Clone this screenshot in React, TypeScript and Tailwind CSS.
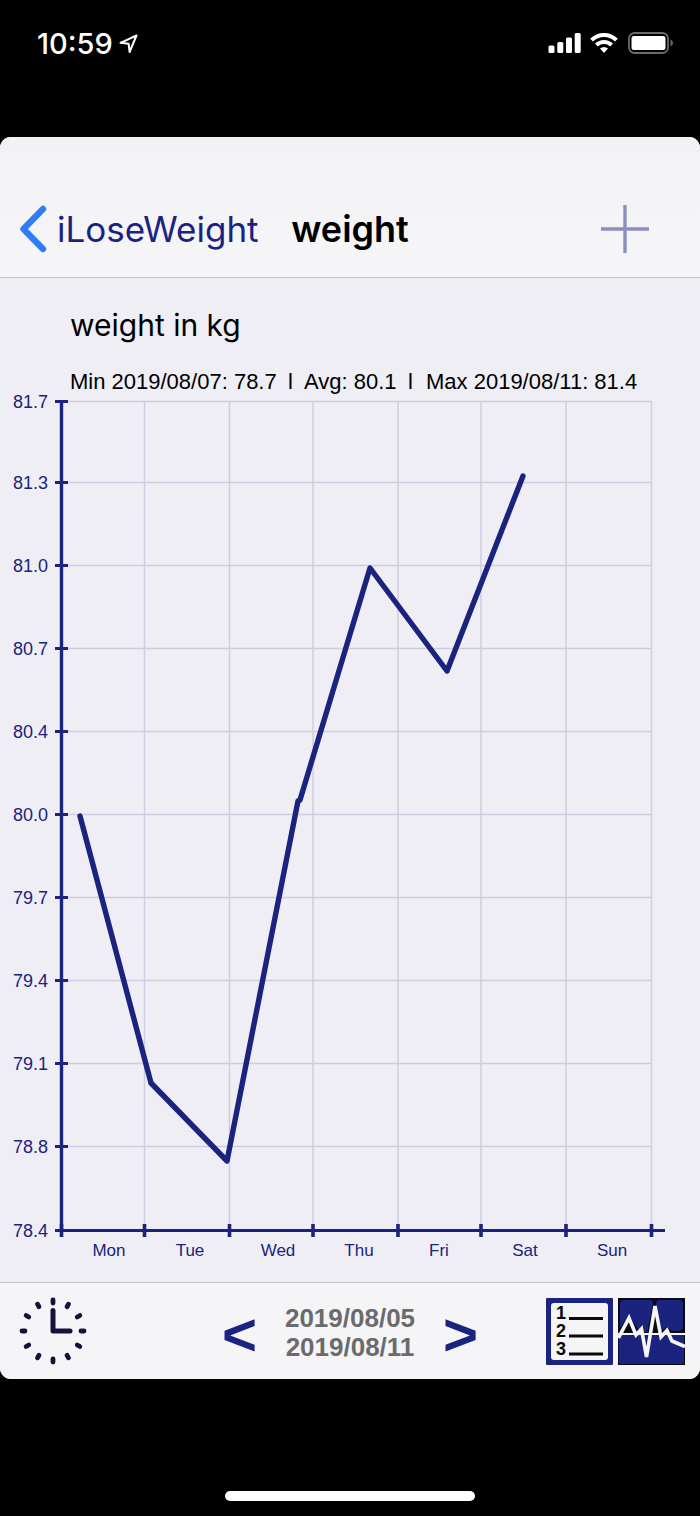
import { useState } from 'react';

interface Tick {
  pos: number;
  label: string;
}

interface DayLabel {
  x: number;
  name: string;
}

const yTicks: Tick[] = [
  { pos: 123.5, label: '81.7' },
  { pos: 204.5, label: '81.3' },
  { pos: 287.5, label: '81.0' },
  { pos: 370.5, label: '80.7' },
  { pos: 453.5, label: '80.4' },
  { pos: 536.5, label: '80.0' },
  { pos: 619.5, label: '79.7' },
  { pos: 702.5, label: '79.4' },
  { pos: 785.5, label: '79.1' },
  { pos: 868.5, label: '78.8' },
  { pos: 952.5, label: '78.4' },
];

const xTicks = [61.5, 144.5, 229.5, 313, 398, 481, 566, 651.5];

const days: DayLabel[] = [
  { x: 109, name: 'Mon' },
  { x: 190, name: 'Tue' },
  { x: 278, name: 'Wed' },
  { x: 359, name: 'Thu' },
  { x: 439, name: 'Fri' },
  { x: 525, name: 'Sat' },
  { x: 612, name: 'Sun' },
];

const weightLine = '80,538 151,805 227,883 298,523 300,522 370,290 447,393 523,198';

function StatusBar() {
  return (
    <div className="flex h-[137px] items-start justify-between pt-7 pr-[26px] pl-[37px]">
      <div className="flex h-8 items-center gap-[6px]">
        <span className="text-[29px] leading-8 font-medium">10:59</span>
        <svg width="19" height="20" viewBox="0 0 19 20" fill="none" stroke="white" strokeWidth="2" strokeLinejoin="round">
          <path d="M17.5 1.5 L1.5 8.8 L9.6 9.7 L10.6 18 Z" />
        </svg>
      </div>
      <svg width="126" height="32" viewBox="0 0 126 32" fill="white">
        {/* Signal */}
        <rect x="0.5" y="17.5" width="6" height="7.5" rx="1.5" />
        <rect x="9.3" y="14" width="6" height="11" rx="1.5" />
        <rect x="18" y="9.5" width="6" height="15.5" rx="1.5" />
        <rect x="26.7" y="5" width="6" height="20" rx="1.5" />
        {/* Wifi */}
        <g fill="none" stroke="white" strokeWidth="4">
          <path d="M43.6 12.2 A17.5 17.5 0 0 1 68.4 12.2" />
          <path d="M48.4 17 A11 11 0 0 1 63.6 17" />
        </g>
        <path d="M52 20.6 A6 6 0 0 1 60 20.6 L56 25 Z" />
        {/* Battery */}
        <rect x="81" y="5" width="39" height="20" rx="5.5" fill="none" stroke="#6b6b6b" strokeWidth="1.8" />
        <rect x="83.5" y="8" width="34" height="14" rx="2.5" />
        <path d="M122.5 11.5 Q125 12.5 125 15 Q125 17.5 122.5 18.5 Z" fill="#6b6b6b" />
      </svg>
    </div>
  );
}

function WeightChart() {
  return (
    <svg viewBox="0 0 700 1004" className="block w-full" role="img" aria-label="weight in kg">
      <text x="70" y="58" fontSize="30" fill="#000">weight in kg</text>
      <g fontSize="22" fill="#000" fontFamily="Liberation Sans, Arial, sans-serif">
        <text x="70" y="111">Min 2019/08/07: 78.7</text>
        <text x="288" y="111">l</text>
        <text x="304" y="111">Avg: 80.1</text>
        <text x="408" y="111">l</text>
        <text x="426" y="111">Max 2019/08/11: 81.4</text>
      </g>

      {/* Grid */}
      <g stroke="#cdcce1" strokeWidth="1.4">
        {yTicks.slice(0, -1).map((tick) => (
          <line key={tick.label} x1="61" x2="652" y1={tick.pos} y2={tick.pos} />
        ))}
        {xTicks.slice(1).map((x) => (
          <line key={x} x1={x} x2={x} y1="124" y2="952" />
        ))}
      </g>

      {/* Axes */}
      <g stroke="#1a237e" strokeWidth="3">
        <line x1="61.5" x2="61.5" y1="125" y2="952" strokeWidth="3.4" />
        <line x1="61" x2="665" y1="952.5" y2="952.5" />
        {yTicks.map((tick) => (
          <line key={tick.label} x1="55" x2="68" y1={tick.pos} y2={tick.pos} />
        ))}
        {xTicks.map((x) => (
          <line key={x} x1={x} x2={x} y1="946" y2="959" strokeWidth="3.6" />
        ))}
      </g>

      <g fontSize="18" fill="#1a237e" fontFamily="Liberation Sans, Arial, sans-serif">
        {yTicks.map((tick) => (
          <text key={tick.label} x="48" y={tick.pos + 6} textAnchor="end">{tick.label}</text>
        ))}
        {days.map((day) => (
          <text key={day.name} x={day.x} y="978" fontSize="17" textAnchor="middle">{day.name}</text>
        ))}
      </g>

      <polyline
        points={weightLine}
        fill="none"
        stroke="#1a237e"
        strokeWidth="5.4"
        strokeLinecap="round"
        strokeLinejoin="round"
      />
    </svg>
  );
}

function ClockIcon() {
  const marks = Array.from({ length: 12 }, (_, i) => i * 30);

  return (
    <svg width="68" height="68" viewBox="0 0 68 68" stroke="#14123c" strokeWidth="4.8" strokeLinecap="round" fill="none">
      {marks.map((angle) => (
        <line key={angle} x1="34" x2="34" y1="3" y2="6" transform={`rotate(${angle} 34 34)`} />
      ))}
      <path d="M34 13.5 V34 H51" strokeLinejoin="round" strokeWidth="5" />
    </svg>
  );
}

function ListIcon() {
  return (
    <svg width="67" height="67" viewBox="0 0 67 67">
      <rect width="67" height="67" rx="1" fill="#1a237e" />
      <rect x="5" y="5" width="57" height="57" rx="3" fill="#f5f5f7" />
      <g stroke="#0a0a0a" strokeWidth="2.8">
        <line x1="23" x2="57" y1="20.5" y2="20.5" />
        <line x1="23" x2="57" y1="38" y2="38" />
        <line x1="23" x2="57" y1="56" y2="56" />
      </g>
      <g fontSize="18" fontWeight="700" fill="#0a0a0a" textAnchor="middle" fontFamily="Liberation Sans, Arial, sans-serif">
        <text x="15" y="21">1</text>
        <text x="15" y="39">2</text>
        <text x="15" y="57">3</text>
      </g>
    </svg>
  );
}

function PulseIcon() {
  return (
    <svg width="67" height="67" viewBox="0 0 67 67">
      <rect width="67" height="67" fill="#0a0a12" />
      <path d="M0.8 36 V66 H66 V37 H0.8 Z" fill="#1a237e" />
      <path d="M6 2 H32 Q35 2 35 6 L29 35 L20 31 L11 17 L2 30 V6 Q2 2 6 2 Z" fill="#1a237e" />
      <path d="M40 2 H61 Q65 2 65 6 V28 Q65 33 61 33 H54 L49 29 L43 33 L38 8 Q38 2 40 2 Z" fill="#1a237e" />
      <line x1="0" x2="67" y1="36" y2="36" stroke="#f5f5f7" strokeWidth="1.8" />
      <path
        d="M0.5 40 L11 20 L18 37 L23.5 31 L28.5 59 L37 8 L43 39 L49 32.5 L54 43 L67 48.5"
        fill="none"
        stroke="#f5f5f7"
        strokeWidth="3.6"
      />
    </svg>
  );
}

export default function App() {
  const [view, setView] = useState<'list' | 'chart'>('chart');

  return (
    <div className="min-h-screen bg-black font-['Inter',sans-serif] text-white">
      <StatusBar />

      <main className="overflow-hidden rounded-[11px] bg-[#efeef4] text-black">
        {/* Header */}
        <header className="grid h-[141px] grid-cols-[1fr_auto_1fr] items-center border-b border-[#c4c4c9] bg-linear-to-b from-[#f2f2f5] to-[#f6f6f8] px-5 pt-11">
          <a href="#" className="flex items-center gap-[10px] text-[35px] leading-10 whitespace-nowrap text-[#1a237e]">
            <svg width="27" height="48" viewBox="0 0 27 48" fill="none" stroke="#2f7cf6" strokeWidth="6.4" strokeLinecap="round" strokeLinejoin="round">
              <path d="M23 4 L3.5 24 L23 44" />
            </svg>
            iLoseWeight
          </a>
          <h1 className="text-[36px] leading-10 font-semibold">weight</h1>
          <button aria-label="Add" className="mr-[30px] justify-self-end">
            <svg width="50" height="50" viewBox="0 0 50 50" stroke="#8a8fc0" strokeWidth="3.4">
              <path d="M25 1 V49 M1 25 H49" />
            </svg>
          </button>
        </header>

        <WeightChart />

        {/* Toolbar */}
        <footer className="grid h-[97px] grid-cols-[1fr_auto_1fr] items-center border-t border-[#c4c4c9] bg-[#f5f5f7] px-[15px]">
          <button aria-label="Today" className="ml-1 justify-self-start">
            <ClockIcon />
          </button>
          <div className="flex items-center gap-7 font-['Liberation_Sans',Arial,sans-serif] font-bold">
            <button aria-label="Previous week" className="pt-2 text-[60px] leading-[60px] text-[#1a237e]">&lt;</button>
            <div className="pt-1 text-center text-[26px] leading-[29px] text-[#6b6b6d]">
              <p>2019/08/05</p>
              <p>2019/08/11</p>
            </div>
            <button aria-label="Next week" className="pt-2 text-[60px] leading-[60px] text-[#1a237e]">&gt;</button>
          </div>
          <div className="flex gap-[5px] justify-self-end">
            <button aria-label="List" aria-pressed={view === 'list'} onClick={() => setView('list')}>
              <ListIcon />
            </button>
            <button aria-label="Chart" aria-pressed={view === 'chart'} onClick={() => setView('chart')}>
              <PulseIcon />
            </button>
          </div>
        </footer>
      </main>

      {/* Home indicator */}
      <div className="flex justify-center pt-28 pb-[15px]">
        <div className="h-[10px] w-[250px] rounded-full bg-white" />
      </div>
    </div>
  );
}
